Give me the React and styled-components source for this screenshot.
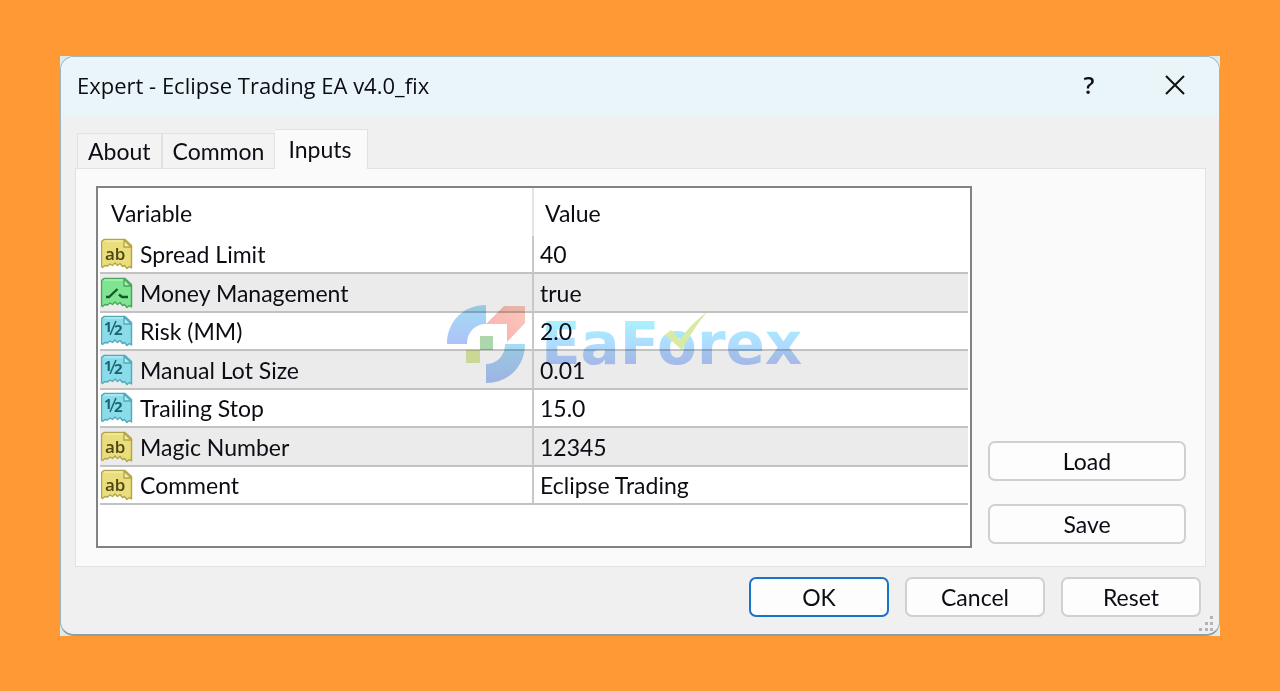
import { useState } from "react";
import styled, { createGlobalStyle } from "styled-components";

const inputs = [
  { name: "Spread Limit", value: "40", type: "string" },
  { name: "Money Management", value: "true", type: "bool" },
  { name: "Risk (MM)", value: "2.0", type: "double" },
  { name: "Manual Lot Size", value: "0.01", type: "double" },
  { name: "Trailing Stop", value: "15.0", type: "double" },
  { name: "Magic Number", value: "12345", type: "string" },
  { name: "Comment", value: "Eclipse Trading", type: "string" },
];

const palette = {
  string: { fill: "#eadd7c", light: "#f6eda4", line: "#b3a448", ink: "#4d4515" },
  bool: { fill: "#7fe592", light: "#a9f3b4", line: "#47a65b", ink: "#145a26" },
  double: { fill: "#8adcea", light: "#b3eef5", line: "#52a9ba", ink: "#1c6371" },
};

function TypeIcon({ type }) {
  const c = palette[type];
  return (
    <Icon viewBox="0 0 32 32" aria-hidden="true">
      <path
        d="M3 1.500h21l6.500 6v22.500l-2-1.500-2.500 2-2.500-3-2 1-2.500-3-2.500 2-2.500-2.500-2.500 2.500-2.500-1.500-2.500 2-2.500-.5-2.500 2-1-1V3.500z"
        fill={c.fill}
        stroke={c.line}
        strokeWidth="1.400"
        strokeLinejoin="round"
      />
      <path d="M3.500 3h19" stroke={c.light} strokeWidth="1.500" />
      <path d="M23 2v7h7z" fill={c.light} stroke={c.line} strokeWidth="1.300" />
      {type === "string" && (
        <text x="4" y="22" fontSize="17" fontWeight="600" fill={c.ink}>
          ab
        </text>
      )}
      {type === "bool" && (
        <path
          d="M5 20h3l8.500-8M18 17.500l3 2.500h6"
          fill="none"
          stroke={c.ink}
          strokeWidth="2.400"
        />
      )}
      {type === "double" && (
        <>
          <text x="3" y="17" fontSize="14" fontWeight="700" fill={c.ink}>
            1
          </text>
          <path d="M9 20l6-14" stroke={c.ink} strokeWidth="1.500" />
          <text x="13" y="20" fontSize="15" fontWeight="700" fill={c.ink}>
            2
          </text>
        </>
      )}
    </Icon>
  );
}

function Watermark() {
  return (
    <Mark aria-hidden="true">
      <svg width="78" height="78" viewBox="0 0 78 78">
        <defs>
          <linearGradient id="arc" x1="0" y1="0" x2="0" y2="1">
            <stop offset="0" stopColor="#a4dcf4" />
            <stop offset="1" stopColor="#adc2f8" />
          </linearGradient>
          <linearGradient id="arrow" x1="0" y1="1" x2="1" y2="0">
            <stop offset="0" stopColor="#f8aeb4" />
            <stop offset="1" stopColor="#fac9b8" />
          </linearGradient>
        </defs>
        <path d="M39 0v19c-11 0-19 8-19 20H0C0 17 16 0 39 0z" fill="url(#arc)" />
        <path d="M39 78V59c11 0 19-8 19-20h20c0 22-16 39-39 39z" fill="url(#arc)" />
        <path d="M39 19L57 1h21v17L60 37V19z" fill="url(#arrow)" />
        <path d="M33 31h13v14H33z" fill="#aed6ac" />
        <path d="M19 45h14v13H19z" fill="#dbeaa2" />
      </svg>
      <Brand>
        EaForex
        <Check viewBox="0 0 42 38">
          <path d="M0 23l6-5 9 10C22 17 31 8 42 0 33 11 24 24 17 38z" fill="#d9eba2" />
        </Check>
      </Brand>
    </Mark>
  );
}

function App() {
  const [tab, setTab] = useState("Inputs");
  return (
    <>
      <GlobalStyle />
      <Page>
        <Backing>
          <Dialog role="dialog" aria-labelledby="title">
            <TitleBar>
              <Title id="title">Expert - Eclipse Trading EA v4.0_fix</Title>
              <TitleButton aria-label="Help">?</TitleButton>
              <TitleButton aria-label="Close">
                <svg width="20" height="20" viewBox="0 0 20 20">
                  <path d="M1 1l18 18M19 1L1 19" stroke="#111" strokeWidth="2" />
                </svg>
              </TitleButton>
            </TitleBar>
            <Tabs role="tablist">
              {["About", "Common", "Inputs"].map((name) => (
                <Tab
                  key={name}
                  role="tab"
                  aria-selected={tab === name}
                  $active={tab === name}
                  onClick={() => setTab(name)}
                >
                  {name}
                </Tab>
              ))}
            </Tabs>
            <Panel role="tabpanel">
              <ListBox>
                <Table>
                  <thead>
                    <tr>
                      <th>Variable</th>
                      <th>Value</th>
                    </tr>
                  </thead>
                  <tbody>
                    {inputs.map((row) => (
                      <tr key={row.name}>
                        <td>
                          <Name>
                            <TypeIcon type={row.type} />
                            {row.name}
                          </Name>
                        </td>
                        <td>{row.value}</td>
                      </tr>
                    ))}
                  </tbody>
                </Table>
                <Watermark />
              </ListBox>
              <Side>
                <Button>Load</Button>
                <Button>Save</Button>
              </Side>
            </Panel>
            <Footer>
              <Button $primary>OK</Button>
              <Button>Cancel</Button>
              <Button>Reset</Button>
              <Grip viewBox="0 0 15 15" aria-hidden="true">
                <path d="M11 0h3v3h-3zM6 6h3v3H6zM11 6h3v3h-3zM0 12h3v3H0zM6 12h3v3H6zM11 12h3v3h-3z" />
              </Grip>
            </Footer>
          </Dialog>
        </Backing>
      </Page>
    </>
  );
}

const GlobalStyle = createGlobalStyle`
  * {
    box-sizing: border-box;
  }
  body {
    margin: 0;
    background: #ff9933;
    color: #0c0c14;
    font-family: "Liberation Sans Narrow", Lato, "Liberation Sans", sans-serif;
    font-size: 23px;
    line-height: 28px;
  }
  button {
    font: inherit;
    color: inherit;
    padding: 0;
  }
`;

const Page = styled.main`
  min-height: 100vh;
  padding: 56px 60px;
`;

const Backing = styled.div`
  background: #dcebed;
`;

const Dialog = styled.section`
  border: 1px solid #9fb4bd;
  border-bottom: 2px solid #8e9ea5;
  border-radius: 14px;
  background: #f0f0f0;
  overflow: hidden;
`;

const TitleBar = styled.header`
  display: flex;
  align-items: center;
  height: 60px;
  padding: 0 16px 4px;
  background: #e9f5f8;
`;

const Title = styled.h1`
  flex: 1;
  margin: 0;
  font: 400 22px/28px "Open Sans", "Noto Sans", sans-serif;
`;

const TitleButton = styled.button`
  display: grid;
  place-items: center;
  width: 56px;
  height: 40px;
  margin-left: 30px;
  border: 0;
  background: none;
  font: 600 24px/28px "Open Sans", sans-serif;
`;

const Tabs = styled.div`
  display: flex;
  align-items: flex-end;
  height: 51px;
  padding-left: 16px;
`;

const Tab = styled.button`
  position: relative;
  height: ${(p) => (p.$active ? "40px" : "35px")};
  padding: ${(p) => (p.$active ? "0 16px 2px 13px" : "0 10px")};
  margin-bottom: ${(p) => (p.$active ? "-1px" : "0")};
  border: 1px solid #e2e2e2;
  border-bottom: 0;
  border-left-width: ${(p) => (p.$active ? "0" : "1px")};
  background: ${(p) => (p.$active ? "#fafafa" : "#f3f3f3")};
`;

const Panel = styled.div`
  display: flex;
  gap: 16px;
  margin: 0 13px 0 14px;
  padding: 17px 19px 18px 20px;
  border: 1px solid #e2e2e2;
  background: #fafafa;
`;

const ListBox = styled.div`
  position: relative;
  flex: 1;
  padding: 0 2px 41px;
  border: 2px solid #828282;
  background: #fff;
`;

const Table = styled.table`
  width: 100%;
  table-layout: fixed;
  border-collapse: separate;
  border-spacing: 0;

  th {
    height: 48px;
    padding: 2px 11px 0;
    text-align: left;
    font-weight: 400;
  }
  td {
    height: 38px;
    padding: 0 6px;
    border-bottom: 2px solid #c2c2c2;
  }
  tr:nth-child(even) td {
    height: 39px;
    background: #ebebeb;
  }
  th:first-child {
    border-right: 2px solid #e4e4e4;
  }
  td:first-child {
    padding: 0 1px;
    border-right: 2px solid #c8c8c8;
  }
`;

const Name = styled.div`
  display: flex;
  align-items: center;
  gap: 7px;
`;

const Icon = styled.svg`
  width: 32px;
  height: 32px;
  font-family: "Open Sans", sans-serif;
`;

const Mark = styled.div`
  position: absolute;
  top: 117px;
  left: 349px;
  display: flex;
  align-items: center;
  gap: 16px;
  mix-blend-mode: multiply;
  pointer-events: none;
`;

const Brand = styled.span`
  position: relative;
  font: 700 58px/72px "DejaVu Sans", sans-serif;
  color: transparent;
  background: linear-gradient(#a8f0ff 20%, #b4c8ff 80%);
  background-clip: text;
`;

const Check = styled.svg`
  position: absolute;
  top: 4px;
  left: 124px;
  width: 42px;
  height: 38px;
`;

const Side = styled.div`
  display: flex;
  flex-direction: column;
  justify-content: flex-end;
  gap: 23px;
  width: 198px;
  padding-bottom: 4px;
`;

const Button = styled.button`
  height: 40px;
  border: ${(p) => (p.$primary ? "2px solid #1a73c9" : "2px solid #d0d0d0")};
  border-radius: 7px;
  background: #fdfdfd;
`;

const Footer = styled.footer`
  position: relative;
  display: flex;
  justify-content: flex-end;
  gap: 16px;
  padding: 10px 18px 17px;

  ${Button} {
    width: 140px;
  }
`;

const Grip = styled.svg`
  position: absolute;
  right: 5px;
  bottom: 3px;
  width: 15px;
  height: 15px;
  fill: #b4b4b4;
`;

export default App;
